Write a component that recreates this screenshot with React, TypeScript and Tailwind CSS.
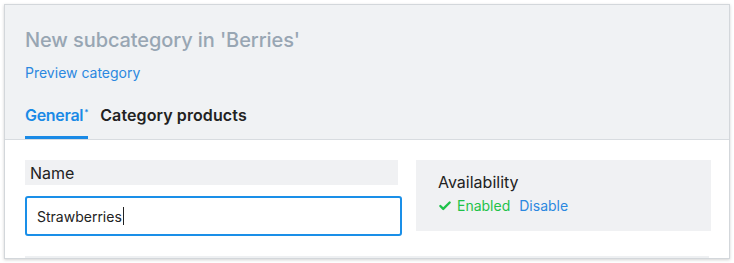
import { Check } from 'lucide-react';

const App = () => {
  return (
    <div className="w-[734px] h-[263px] bg-white p-[4px] font-['Inter',sans-serif]">
      <div className="h-[255px] border border-[#d3d7db] shadow-[0_1px_3px_rgba(0,0,0,0.18)] bg-white overflow-hidden flex flex-col">
        {/* Header */}
        <div className="bg-[#f0f2f4] border-b border-[#d8dce0] px-[20px] pt-[21px] h-[135px] flex flex-col">
          <h1 className="text-[20px] leading-[28px] font-medium text-[#98a6b3] tracking-[-0.1px]">
            New subcategory in 'Berries'
          </h1>
          <a className="mt-[9px] text-[14px] leading-[20px] text-[#2b88e0]">Preview category</a>
          <div className="mt-auto flex gap-[12px]">
            <div className="flex flex-col">
              <span className="text-[16px] leading-[20px] font-semibold text-[#1a8ae6] tracking-[-0.3px]">
                General<sup className="text-[8px] ml-[1px] top-[-0.8em]">*</sup>
              </span>
              <div className="mt-[11px] h-[3px] bg-[#1a8ae6]" />
            </div>
            <span className="text-[16px] leading-[20px] font-semibold text-[#222] tracking-[0.1px]">Category products</span>
          </div>
        </div>

        {/* Body */}
        <div className="flex-1 pl-[20px] pr-[17px] pt-[20px] flex flex-col">
          <div className="flex gap-[14px]">
            <div className="w-[377px] flex flex-col">
              <div className="w-[373px] h-[25px] bg-[#f0f1f3] pl-[5px] flex items-center text-[16px] text-[#222]">
                Name
              </div>
              <div className="mt-[11px] h-[40px] border-2 border-[#1a8fe8] rounded-[3px] pl-[10px] flex items-center text-[14px] text-[#222]">
                Strawberries<span className="w-px h-[18px] bg-[#222] ml-px" />
              </div>
            </div>
            <div className="w-[295px] h-[71px] bg-[#f0f1f3] pl-[22px] pt-[11px]">
              <div className="text-[16px] leading-[22px] text-[#222]">Availability</div>
              <div className="mt-[3px] flex items-center text-[14px] leading-[20px]">
                <Check className="w-[14px] h-[14px] text-[#1ec24a]" strokeWidth={4} />
                <span className="ml-[5px] text-[#1ec24a]">Enabled</span>
                <span className="ml-[9px] text-[#2b88e0]">Disable</span>
              </div>
            </div>
          </div>
          <div className="mt-auto mr-[3px] h-[2px] bg-[#eef0f2]" />
        </div>
      </div>
    </div>
  );
};

export default App;
